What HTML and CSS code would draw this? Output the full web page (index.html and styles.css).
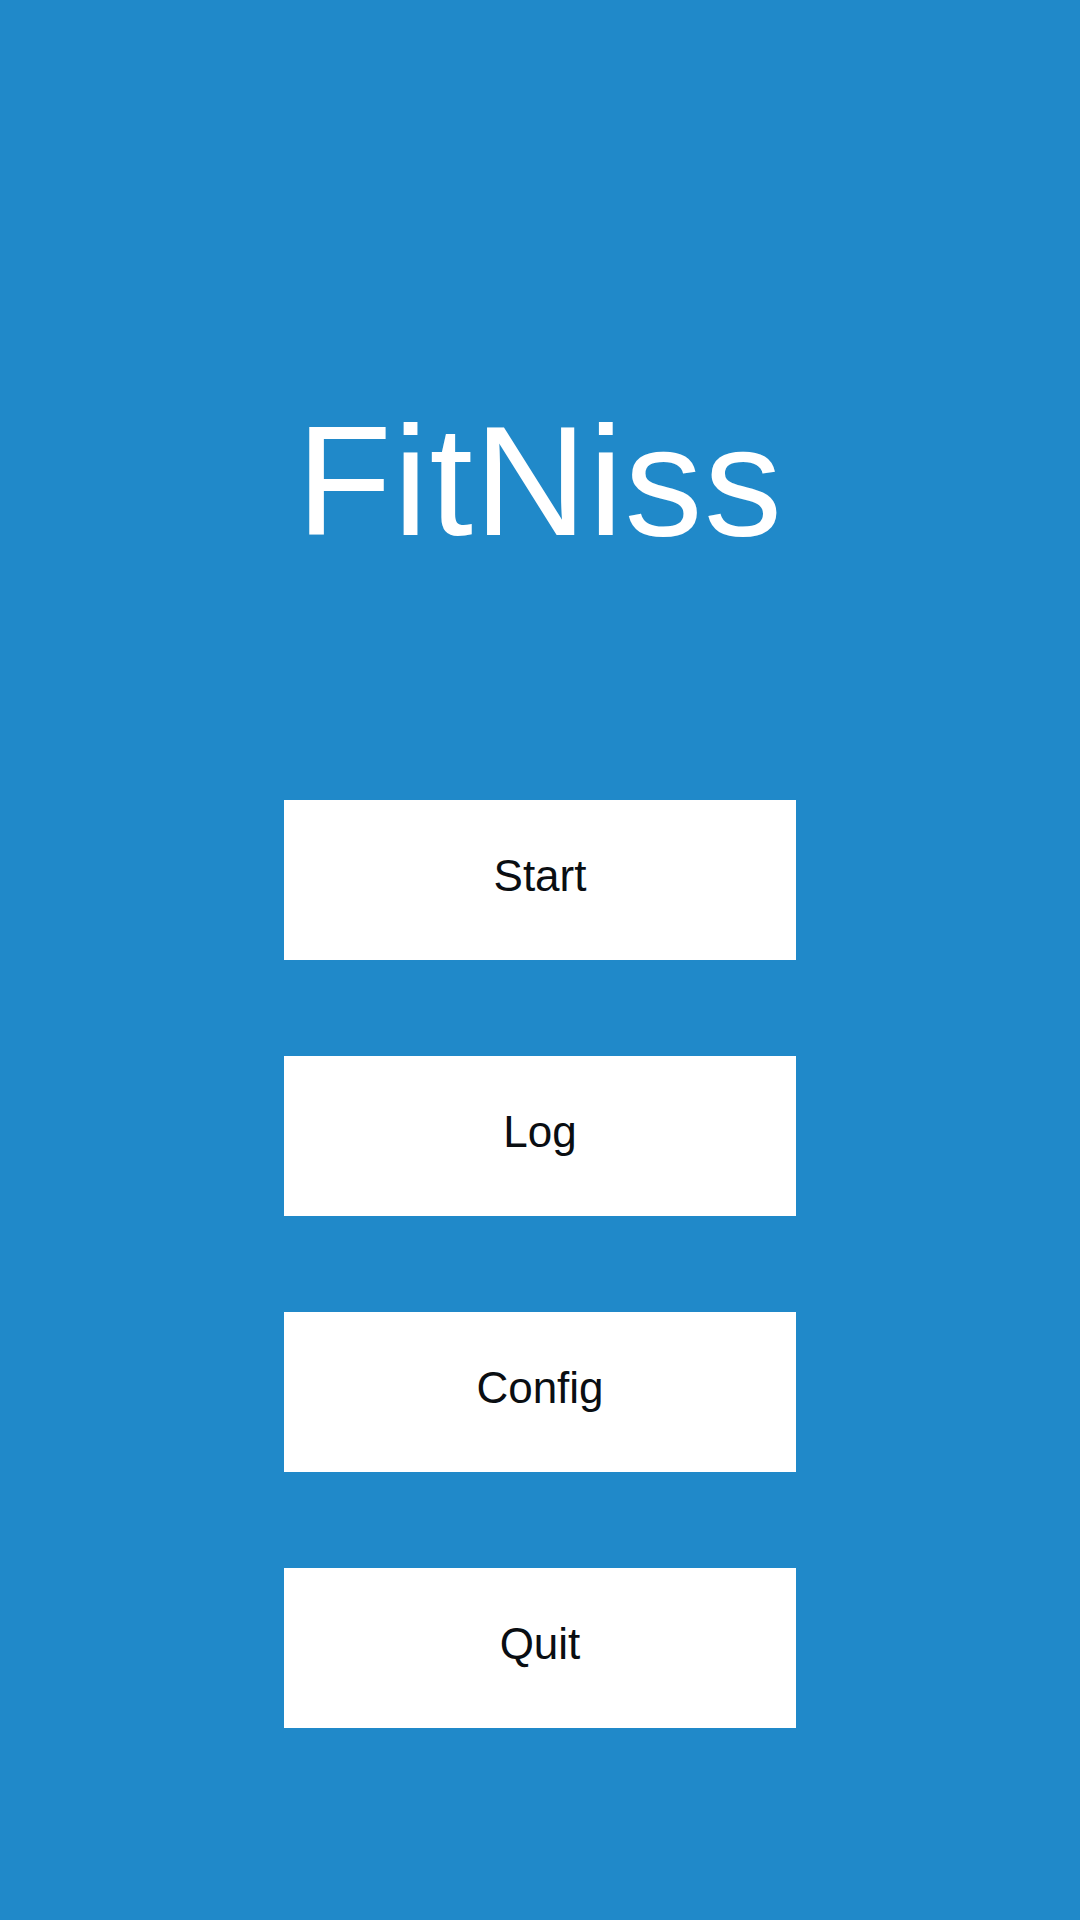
FILE: index.html
```html
<!DOCTYPE html>
<html>
<head>
<meta charset="utf-8">
<link rel="stylesheet" href="styles.css">
</head>
<body>
<main class="screen">
  <h1 class="title">FitNiss</h1>
  <nav class="menu">
    <button class="btn">Start</button>
    <button class="btn">Log</button>
    <button class="btn">Config</button>
    <button class="btn">Quit</button>
  </nav>
</main>
</body>
</html>
```
FILE: styles.css
```css
html, body {
  margin: 0;
  padding: 0;
}
body {
  background: #2089c9;
  font-family: "Liberation Sans", Arial, sans-serif;
}
.screen {
  width: 1080px;
  height: 1920px;
  display: flex;
  flex-direction: column;
  align-items: center;
  padding-top: 403px;
  box-sizing: border-box;
}
.title {
  margin: 0;
  font-size: 156px;
  line-height: 1;
  letter-spacing: 1.5px;
  font-weight: normal;
  color: #ffffff;
  height: 156px;
}
.menu {
  margin-top: 241px;
  display: flex;
  flex-direction: column;
  gap: 96px;
}
.btn {
  width: 512px;
  height: 160px;
  background: #ffffff;
  border: none;
  padding: 0 0 8px 0;
  margin: 0;
  box-sizing: border-box;
  font-family: "Liberation Sans", Arial, sans-serif;
  font-size: 44px;
  color: #0a0e12;
  display: flex;
  align-items: center;
  justify-content: center;
}
```
